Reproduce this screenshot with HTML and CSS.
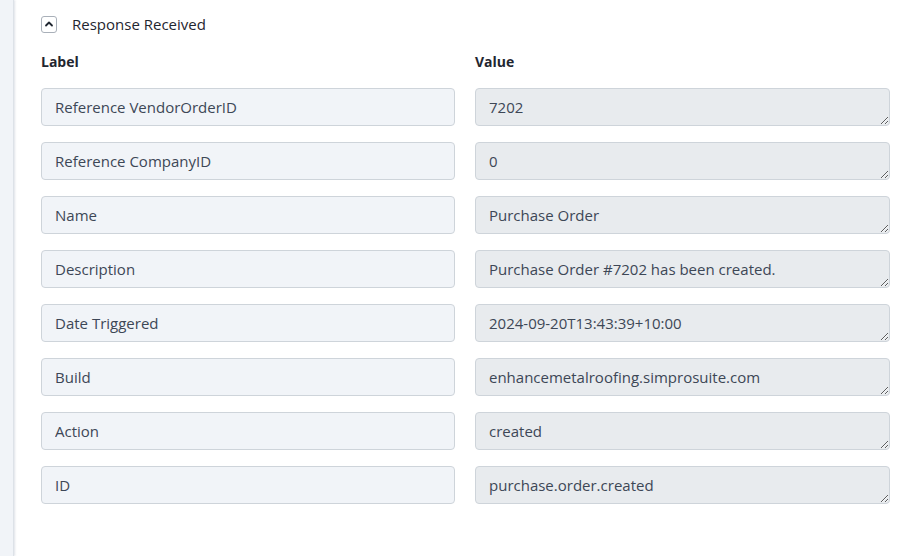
FILE: index.html
```html
<!DOCTYPE html>
<html lang="en">
<head>
<meta charset="utf-8">
<title>Response Received</title>
<link rel="stylesheet" href="styles.css">
</head>
<body>
<div class="page">
  <aside class="rail"></aside>
  <main class="panel">
    <div class="section-head">
      <button class="toggle" type="button" aria-label="Collapse">
        <svg width="10" height="10" viewBox="0 0 10 10"><path d="M2 6.5 L5 3.5 L8 6.5" fill="none" stroke="#1f2630" stroke-width="1.8" stroke-linecap="round" stroke-linejoin="round"/></svg>
      </button>
      <span class="section-title">Response Received</span>
    </div>
    <div class="grid">
      <div class="col-head">Label</div>
      <div class="col-head">Value</div>

      <input class="field-label" readonly value="Reference VendorOrderID">
      <textarea class="field-value" readonly>7202</textarea>

      <input class="field-label" readonly value="Reference CompanyID">
      <textarea class="field-value" readonly>0</textarea>

      <input class="field-label" readonly value="Name">
      <textarea class="field-value" readonly>Purchase Order</textarea>

      <input class="field-label" readonly value="Description">
      <textarea class="field-value" readonly>Purchase Order #7202 has been created.</textarea>

      <input class="field-label" readonly value="Date Triggered">
      <textarea class="field-value" readonly>2024-09-20T13:43:39+10:00</textarea>

      <input class="field-label" readonly value="Build">
      <textarea class="field-value" readonly>enhancemetalroofing.simprosuite.com</textarea>

      <input class="field-label" readonly value="Action">
      <textarea class="field-value" readonly>created</textarea>

      <input class="field-label" readonly value="ID">
      <textarea class="field-value" readonly>purchase.order.created</textarea>
    </div>
  </main>
</div>
</body>
</html>
```

FILE: styles.css
```css
html, body {
  margin: 0;
  padding: 0;
  background: #ffffff;
  font-family: "Open Sans", "Noto Sans", sans-serif;
  color: #3d4756;
}

.page {
  display: flex;
  min-height: 556px;
}

.rail {
  width: 14px;
  flex: none;
  background: #f1f4f8;
  box-shadow: inset -1px 0 0 #dde2e8, 1px 0 2px rgba(160, 170, 185, 0.35);
}

.panel {
  flex: 1;
  padding: 14px 26px 0 27px;
}

.section-head {
  display: flex;
  align-items: center;
  height: 20px;
  gap: 15px;
}

.toggle {
  width: 16px;
  height: 17px;
  padding: 0;
  margin: 0;
  border: 1px solid #a9b0b9;
  border-radius: 3px;
  background: #fff;
  display: flex;
  align-items: center;
  justify-content: center;
}

.toggle svg {
  display: block;
}

.section-title {
  font-size: 15px;
  color: #1f2630;
}

.grid {
  display: grid;
  grid-template-columns: 414px 415px;
  column-gap: 20px;
  row-gap: 16px;
  margin-top: 18px;
}

.col-head {
  font-size: 14px;
  font-weight: 700;
  color: #1f2630;
  line-height: 20px;
  margin-bottom: 0;
}

.field-label,
.field-value {
  box-sizing: border-box;
  height: 38px;
  margin: 0;
  font-family: inherit;
  font-size: 15px;
  color: #3d4756;
  border: 1px solid #ced4da;
  border-radius: 4px;
  outline: none;
}

.field-label {
  width: 414px;
  padding: 0 13px;
  background: #f1f4f8;
}

.field-value {
  width: 415px;
  padding: 6px 13px;
  line-height: 24px;
  background: #e8ebee;
  overflow: hidden;
  resize: vertical;
}
```
